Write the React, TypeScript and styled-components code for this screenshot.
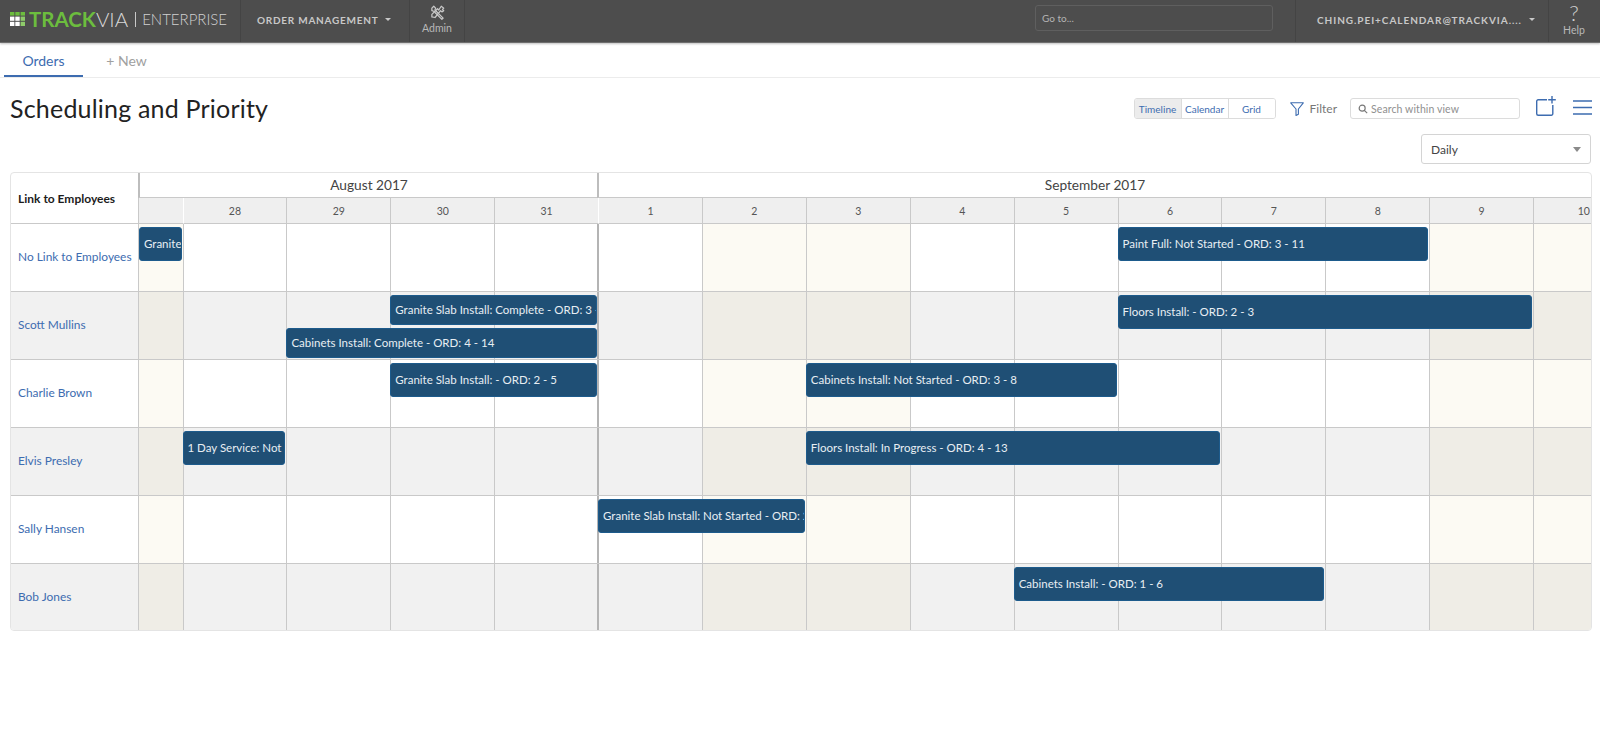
import styled, { createGlobalStyle } from "styled-components";

const FONT = `Lato, "Open Sans", Arial, sans-serif`;

const GRID_COLUMNS = "128px 43.5px repeat(13, 103.9px) 57.8px";

interface IBar {
  label: string;
  from: number; // grid line, 2 is the first partial day
  to: number;
  offset?: number;
  height?: number;
}

interface IEmployee {
  name: string;
  bars: IBar[];
}

// grid line numbers: 2 = Aug 27, 3 = Aug 28, 7 = Sep 1, 12 = Sep 6 ...
const employees: IEmployee[] = [
  {
    name: "No Link to Employees",
    bars: [
      { label: "Granite Slab Install: Not Started - ORD: 1 - 2", from: 2, to: 3 },
      { label: "Paint Full: Not Started - ORD: 3 - 11", from: 12, to: 15 },
    ],
  },
  {
    name: "Scott Mullins",
    bars: [
      { label: "Granite Slab Install: Complete - ORD: 3 - 4", from: 5, to: 7, height: 30 },
      { label: "Cabinets Install: Complete - ORD: 4 - 14", from: 4, to: 7, offset: 33, height: 30 },
      { label: "Floors Install: - ORD: 2 - 3", from: 12, to: 16 },
    ],
  },
  {
    name: "Charlie Brown",
    bars: [
      { label: "Granite Slab Install: - ORD: 2 - 5", from: 5, to: 7 },
      { label: "Cabinets Install: Not Started - ORD: 3 - 8", from: 9, to: 12 },
    ],
  },
  {
    name: "Elvis Presley",
    bars: [
      { label: "1 Day Service: Not Started - ORD: 5 - 1", from: 3, to: 4 },
      { label: "Floors Install: In Progress - ORD: 4 - 13", from: 9, to: 13 },
    ],
  },
  {
    name: "Sally Hansen",
    bars: [{ label: "Granite Slab Install: Not Started - ORD: 2 - 9", from: 7, to: 9 }],
  },
  {
    name: "Bob Jones",
    bars: [{ label: "Cabinets Install: - ORD: 1 - 6", from: 11, to: 14 }],
  },
];

const days = [28, 29, 30, 31, 1, 2, 3, 4, 5, 6, 7, 8, 9, 10];
const weekendLines = [2, 8, 9, 15, 16];
const cellLines = Array.from({ length: 15 }, (_, i) => i + 2);
const MONTH_START_LINE = 7;
const LAST_LINE = 16;

export default function App() {
  return (
    <Page>
      <GlobalStyle />
      <TopBar>
        <LogoBlock>
          <LogoMark viewBox="0 0 15 14">
            <rect x="0" y="0" width="4.4" height="3.6" fill="#6cbd3e" />
            <rect x="5.3" y="0" width="4.4" height="3.6" fill="#6cbd3e" />
            <rect x="10.6" y="0" width="4.4" height="3.6" fill="#6cbd3e" />
            <rect x="0" y="4.6" width="4.4" height="4.2" fill="#fff" />
            <rect x="5.3" y="4.6" width="4.4" height="4.2" fill="#fff" />
            <rect x="10.6" y="4.6" width="4.4" height="4.2" fill="#8ecb6a" />
            <rect x="0" y="9.8" width="4.4" height="4.2" fill="#fff" />
            <rect x="5.3" y="9.8" width="4.4" height="4.2" fill="#fff" />
            <rect x="10.6" y="9.8" width="4.4" height="4.2" fill="#8ecb6a" />
          </LogoMark>
          <LogoTrack>TRACK</LogoTrack>
          <LogoVia>VIA</LogoVia>
          <LogoEdition>ENTERPRISE</LogoEdition>
        </LogoBlock>
        <AppMenu>
          ORDER MANAGEMENT
          <Caret />
        </AppMenu>
        <IconItem $width={55}>
          <svg width="15" height="15" viewBox="0 0 24 24" fill="none" stroke="#c8c8c8" strokeWidth="2" strokeLinejoin="round">
            <path d="M3 5l3-3 3 3-1 3 13 13-2 2L6 10 3 9z" />
            <path d="M14 8l4-6 4 3-2 2 2 2-3 2-2-2-9 11-5-1 0-4 9-9z" />
          </svg>
          Admin
        </IconItem>
        <GoToCell>
          <GoTo>Go to...</GoTo>
        </GoToCell>
        <UserMenu>
          CHING.PEI+CALENDAR@TRACKVIA....
          <Caret />
        </UserMenu>
        <IconItem $width={52} $divider>
          <HelpMark>?</HelpMark>
          Help
        </IconItem>
      </TopBar>

      <Tabs>
        <Tab $active>Orders</Tab>
        <Tab>+ New</Tab>
      </Tabs>

      <ViewHeader>
        <Title>Scheduling and Priority</Title>
        <Tools>
          <ViewSwitch>
            <ViewOption $active>Timeline</ViewOption>
            <ViewOption>Calendar</ViewOption>
            <ViewOption>Grid</ViewOption>
          </ViewSwitch>
          <FilterButton>
            <svg width="14" height="14" viewBox="0 0 14 14" fill="none" stroke="#3d6cb0" strokeWidth="1.1" strokeLinejoin="round">
              <path d="M0.7 0.8h12.6L8.4 7v5.2L6 13.4V7z" />
            </svg>
            Filter
          </FilterButton>
          <SearchBox>
            <svg width="10" height="10" viewBox="0 0 12 12" fill="none" stroke="#777" strokeWidth="1.4">
              <circle cx="5" cy="5" r="3.6" />
              <path d="M7.6 7.6L11 11" />
            </svg>
            Search within view
          </SearchBox>
          <AddIcon width="20" height="20" viewBox="0 0 20 20">
            <path d="M11 3.7H2.2a1.5 1.5 0 0 0-1.5 1.5v12.6a1.5 1.5 0 0 0 1.5 1.5h13.1a1.5 1.5 0 0 0 1.5-1.5V9" />
            <path d="M16 0v7.4M12.2 3.7h7.6" />
          </AddIcon>
          <MenuIcon width="19" height="15" viewBox="0 0 19 15">
            <path d="M0 1h19M0 7.5h19M0 14h19" />
          </MenuIcon>
        </Tools>
      </ViewHeader>

      <ScaleRow>
        <ScaleSelect>
          Daily
          <GrayCaret />
        </ScaleSelect>
      </ScaleRow>

      <Timeline>
        <HeaderRow>
          <CornerCell>Link to Employees</CornerCell>
          <MonthCell $from={2} $to={7}>
            August 2017
          </MonthCell>
          <MonthCell $from={7} $to={17}>
            September 2017
          </MonthCell>
          <DayCell $from={2} $edge="none" />
          {days.map((d, i) => {
            const line = i + 3;
            return (
              <DayCell
                key={i}
                $from={line}
                $edge={line === 3 || line === MONTH_START_LINE ? "#fff" : "#c9c9c9"}
                $clipped={line === LAST_LINE}
              >
                {d}
              </DayCell>
            );
          })}
        </HeaderRow>
        {employees.map((employee, i) => (
          <Row key={employee.name} $shaded={i % 2 === 1}>
            <NameCell>{employee.name}</NameCell>
            {cellLines.map((line) => (
              <DayBackground
                key={line}
                $line={line}
                $weekend={weekendLines.includes(line)}
                $shaded={i % 2 === 1}
                $monthStart={line === MONTH_START_LINE}
              />
            ))}
            {employee.bars.map((bar) => (
              <Bar key={bar.label} $from={bar.from} $to={bar.to} $offset={bar.offset ?? 0} $height={bar.height ?? 34}>
                {bar.label}
              </Bar>
            ))}
          </Row>
        ))}
      </Timeline>
    </Page>
  );
}

const GlobalStyle = createGlobalStyle`
  html, body {
    margin: 0;
    background: #fff;
    font-family: ${FONT};
  }
`;

const Page = styled.div`
  width: 1600px;
  height: 755px;
  overflow: hidden;
`;

const TopBar = styled.div`
  display: flex;
  align-items: stretch;
  height: 42px;
  background: #4d4d4d;
  border-bottom: 1px solid #6e6e6e;
  box-shadow: 0 1px 2px rgba(0, 0, 0, 0.25);
  color: #c8c8c8;
`;

const LogoBlock = styled.div`
  box-sizing: border-box;
  display: flex;
  align-items: center;
  width: 241px;
  padding: 0 0 4px 10px;
  border-right: 1px solid #444;
`;

const LogoMark = styled.svg`
  width: 15px;
  height: 14px;
  margin-right: 4px;
`;

const LogoTrack = styled.span`
  font-size: 20.5px;
  font-weight: 700;
  color: #6cbd3e;
`;

const LogoVia = styled.span`
  font-size: 20.5px;
  font-weight: 300;
  color: #d8d8d8;
  margin-right: 7px;
`;

const LogoEdition = styled.span`
  font-size: 15px;
  font-weight: 300;
  color: #d0d0d0;
  border-left: 1px solid #c8c8c8;
  padding-left: 6px;
  line-height: 15px;
`;

const AppMenu = styled.div`
  box-sizing: border-box;
  display: flex;
  align-items: center;
  width: 169px;
  padding: 0 0 3px 16px;
  border-right: 1px solid #444;
  font-size: 10px;
  font-weight: 700;
  letter-spacing: 0.75px;
`;

const Caret = styled.span`
  display: inline-block;
  margin-left: 7px;
  border-left: 3.5px solid transparent;
  border-right: 3.5px solid transparent;
  border-top: 3.5px solid #c8c8c8;
`;

const IconItem = styled.div<{ $width: number; $divider?: boolean }>`
  box-sizing: border-box;
  display: flex;
  flex-direction: column;
  align-items: center;
  justify-content: center;
  gap: 2px;
  width: ${(p) => p.$width}px;
  padding-bottom: 3px;
  font-size: 10.5px;
  border-right: 1px solid ${(p) => (p.$divider ? "transparent" : "#444")};
  border-left: ${(p) => (p.$divider ? "1px solid #444" : "none")};
  color: #b8b8b8;
`;

const HelpMark = styled.span`
  font-size: 22px;
  line-height: 18px;
  font-weight: 300;
  color: #d0d0d0;
`;

const GoToCell = styled.div`
  flex: 1;
  display: flex;
  align-items: center;
  justify-content: flex-end;
  padding-right: 22px;
  border-right: 1px solid #444;
`;

const GoTo = styled.div`
  box-sizing: border-box;
  width: 238px;
  height: 26px;
  margin-bottom: 6px;
  padding: 0 6px;
  line-height: 24px;
  font-size: 10px;
  border: 1px solid #5f5f5f;
  border-radius: 3px;
  color: #b4b4b4;
`;

const UserMenu = styled.div`
  box-sizing: border-box;
  display: flex;
  align-items: center;
  width: 252px;
  padding: 0 0 3px 21px;
  font-size: 10px;
  font-weight: 700;
  letter-spacing: 0.95px;
`;

const Tabs = styled.div`
  display: flex;
  height: 34px;
  padding-left: 4px;
  border-bottom: 1px solid #ececec;
`;

const Tab = styled.div<{ $active?: boolean }>`
  display: flex;
  align-items: center;
  justify-content: center;
  width: 79px;
  height: 34px;
  box-sizing: border-box;
  padding-top: 2px;
  font-size: 14px;
  color: ${(p) => (p.$active ? "#3d6cb0" : "#a0a0a0")};
  border-bottom: 2px solid ${(p) => (p.$active ? "#3d6cb0" : "transparent")};
  margin-right: ${(p) => (p.$active ? "4px" : "0")};
`;

const ViewHeader = styled.div`
  display: flex;
  justify-content: space-between;
  align-items: center;
  height: 21px;
  padding: 20px 8px 15px 10px;
`;

const Title = styled.h1`
  margin: -2px 0 0;
  font-size: 25px;
  font-weight: 400;
  letter-spacing: 0.2px;
  color: #222;
`;

const Tools = styled.div`
  display: flex;
  align-items: center;
  height: 21px;
`;

const ViewSwitch = styled.div`
  display: flex;
  width: 142px;
  height: 21px;
  box-sizing: border-box;
  border: 1px solid #dcdcdc;
  border-radius: 3px;
  overflow: hidden;
`;

const ViewOption = styled.div<{ $active?: boolean }>`
  flex: 1;
  display: flex;
  align-items: center;
  justify-content: center;
  font-size: 10px;
  color: #3d6cb0;
  background: ${(p) => (p.$active ? "#ececec" : "#fff")};
  border-left: ${(p) => (p.$active ? "none" : "1px solid #dcdcdc")};
`;

const FilterButton = styled.div`
  display: flex;
  align-items: center;
  gap: 6px;
  margin-left: 14px;
  font-size: 12px;
  color: #777;
`;

const SearchBox = styled.div`
  box-sizing: border-box;
  display: flex;
  align-items: center;
  gap: 3px;
  width: 170px;
  height: 21px;
  margin-left: 13px;
  padding-left: 7px;
  border: 1px solid #dcdcdc;
  border-radius: 3px;
  font-size: 10.5px;
  letter-spacing: 0.1px;
  color: #909090;
`;

const AddIcon = styled.svg`
  align-self: flex-start;
  margin: -2px 0 0 16px;
  fill: none;
  stroke: #3d6cb0;
  stroke-width: 1.4;
`;

const MenuIcon = styled.svg`
  align-self: flex-start;
  margin: 2px 0 0 17px;
  fill: none;
  stroke: #3d6cb0;
  stroke-width: 1.6;
`;

const ScaleRow = styled.div`
  display: flex;
  justify-content: flex-end;
  height: 38px;
  padding-right: 9px;
`;

const ScaleSelect = styled.div`
  box-sizing: border-box;
  display: flex;
  align-items: center;
  justify-content: space-between;
  width: 170px;
  height: 30px;
  padding: 0 9px;
  border: 1px solid #d4d4d4;
  border-radius: 3px;
  font-size: 12px;
  color: #444;
`;

const GrayCaret = styled.span`
  border-left: 4px solid transparent;
  border-right: 4px solid transparent;
  border-top: 5px solid #8a8a8a;
`;

const Timeline = styled.div`
  width: 1582px;
  margin-left: 10px;
  box-sizing: border-box;
  border: 1px solid #e4e4e4;
  border-radius: 4px;
  overflow: hidden;
`;

const HeaderRow = styled.div`
  display: grid;
  grid-template-columns: ${GRID_COLUMNS};
  grid-template-rows: 25px 26px;
`;

const CornerCell = styled.div`
  grid-row: 1 / 3;
  grid-column: 1;
  display: flex;
  align-items: center;
  padding-left: 7px;
  font-size: 12px;
  font-weight: 700;
  color: #1c1c1c;
  box-sizing: border-box;
  border-right: 1px solid #c9c9c9;
  border-bottom: 1px solid #c9c9c9;
`;

const MonthCell = styled.div<{ $from: number; $to: number }>`
  grid-row: 1;
  grid-column: ${(p) => p.$from} / ${(p) => p.$to};
  display: flex;
  align-items: center;
  justify-content: center;
  margin-left: -1px;
  padding-bottom: 2px;
  font-size: 13.7px;
  color: #444;
  box-sizing: border-box;
  border-left: 2px solid #bdbdbd;
  border-bottom: 1px solid #c9c9c9;
`;

const DayCell = styled.div<{ $from: number; $edge: string; $clipped?: boolean }>`
  grid-row: 2;
  grid-column: ${(p) => p.$from};
  display: flex;
  align-items: center;
  justify-content: ${(p) => (p.$clipped ? "flex-end" : "center")};
  padding-right: ${(p) => (p.$clipped ? "1px" : "0")};
  font-size: 10.5px;
  color: #555;
  background: #efefef;
  box-sizing: border-box;
  border-left: ${(p) => (p.$edge === "none" ? "none" : `1px solid ${p.$edge}`)};
  border-bottom: 1px solid #c9c9c9;
`;

const Row = styled.div<{ $shaded: boolean }>`
  display: grid;
  grid-template-columns: ${GRID_COLUMNS};
  grid-template-rows: 67px;
  background: ${(p) => (p.$shaded ? "#f1f1f1" : "#fff")};
  border-bottom: 1px solid #c9c9c9;

  &:last-child {
    grid-template-rows: 66px;
    border-bottom: none;
  }
`;

const NameCell = styled.div`
  grid-column: 1;
  grid-row: 1;
  display: flex;
  align-items: center;
  padding: 0 0 2px 7px;
  font-size: 11.9px;
  color: #3d6cb0;
  box-sizing: border-box;
  border-right: 1px solid #c9c9c9;
`;

const DayBackground = styled.div<{
  $line: number;
  $weekend: boolean;
  $shaded: boolean;
  $monthStart: boolean;
}>`
  grid-row: 1;
  grid-column: ${(p) => p.$line};
  box-sizing: border-box;
  border-left: ${(p) => (p.$line === 2 ? "none" : `1px solid ${p.$monthStart ? "#b4b4b4" : "#c9c9c9"}`)};
  box-shadow: ${(p) => (p.$monthStart ? "-1px 0 0 #b4b4b4" : "none")};
  background: ${(p) =>
    p.$weekend ? (p.$shaded ? "#efede6" : "#fcfaf3") : "transparent"};
`;

const Bar = styled.div<{ $from: number; $to: number; $offset: number; $height: number }>`
  grid-row: 1;
  grid-column: ${(p) => p.$from} / ${(p) => p.$to};
  align-self: start;
  box-sizing: border-box;
  display: flex;
  align-items: center;
  height: ${(p) => p.$height}px;
  margin: ${(p) => p.$offset + 3}px 1px 0 0;
  padding: 0 4px 2px;
  background: #1f4f75;
  border: 1px solid #1d5b8c;
  border-radius: 3px;
  overflow: hidden;
  font-size: 11.5px;
  color: #e8eef3;
  white-space: nowrap;
  z-index: 1;
`;
